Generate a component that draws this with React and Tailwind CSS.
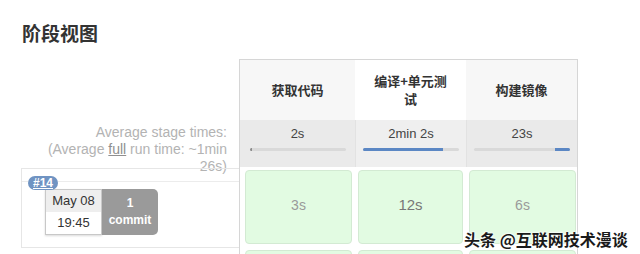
import React from "react";

function Bar({ fill }) {
  return (
    <div className="mx-auto mt-[6px] flex h-[3px] w-[96px] overflow-hidden rounded-full bg-[#d9d9d9]">
      {fill}
    </div>
  );
}

function Cell({ children, cls }) {
  return (
    <div className={"flex h-[74px] items-center justify-center rounded-[4px] border border-[#d3ead3] bg-[#e2fbe2] pb-[3px] " + cls}>
      {children}
    </div>
  );
}

export default function App() {
  return (
    <div className="relative h-[254px] w-[640px] overflow-hidden bg-white font-['Liberation_Sans','Noto_Sans_CJK_SC',sans-serif]">
      <div className="pl-[22px] pt-[23px] font-['Noto_Sans_CJK_SC',sans-serif] text-[19px] font-bold leading-[20px] text-[#333]">
        阶段视图
      </div>
      <div className="mt-[16px] flex">
        {/* left column */}
        <div className="w-[239px] shrink-0">
          <div className="h-[61px]" />
          <div className="h-[48px] pr-[12px] pt-[4px] text-right text-[14px] leading-[17px] text-[#b3b3b3]">
            Average stage times:
            <br />
            (Average <span className="text-[#8f8f8f] underline">full</span> run time: ~1min
            <br />
            26s)
          </div>
          <div className="relative ml-[21px] h-[80px] border-b border-l border-t border-[#e6e6e6]">
            <div className="h-[13px] border-b border-[#ececec]" />
            <div className="absolute left-[6px] top-[7px] rounded-full bg-[#6f93c2] px-[5px] text-[12px] font-bold leading-[14px] text-white underline">
              #14
            </div>
            <div className="ml-[23px] mt-[7px] flex">
              <div className="w-[57px] border border-[#c8c8c8] text-[13px] text-[#333] shadow-[0_1px_2px_rgba(0,0,0,0.15)]">
                <div className="flex h-[22px] items-center justify-center bg-[#eeeeee]">May 08</div>
                <div className="flex h-[22px] items-center justify-center bg-white">19:45</div>
              </div>
              <div className="flex h-[46px] w-[56px] flex-col items-center justify-center rounded-r-[5px] bg-[#9a9a9a] text-[12px] font-bold leading-[17px] text-white">
                <div>1</div>
                <div>commit</div>
              </div>
            </div>
          </div>
        </div>

        {/* stage table */}
        <div className="h-[200px] w-[339px] shrink-0 border-l border-r border-t border-[#d6d6d6]">
          <div className="grid h-[60px] grid-cols-[115px_111px_111px] font-['Noto_Sans_CJK_SC',sans-serif] text-[13px] font-bold leading-[18px] text-[#333]">
            <div className="flex items-center justify-center bg-[#f7f7f7] px-[14px] text-center">获取代码</div>
            <div className="flex items-center justify-center bg-white px-[14px] text-center">编译+单元测试</div>
            <div className="flex items-center justify-center bg-[#f7f7f7] px-[14px] text-center">构建镜像</div>
          </div>
          <div className="grid h-[47px] grid-cols-[115px_111px_111px] text-[13px] leading-[17px] text-[#444]">
            <div className="bg-[#eaeaea] pt-[5px] text-center">
              2s
              <Bar fill={<div className="h-full w-[2px] bg-[#8c8c8c]" />} />
            </div>
            <div className="border-l border-[#e2e2e2] bg-[#efefef] pt-[5px] text-center">
              2min 2s
              <Bar fill={<div className="h-full w-[80px] bg-[#5b87c4]" />} />
            </div>
            <div className="border-l border-[#e2e2e2] bg-[#eaeaea] pt-[5px] text-center">
              23s
              <Bar fill={<div className="ml-auto h-full w-[15px] bg-[#5b87c4]" />} />
            </div>
          </div>
          <div className="grid grid-cols-[115px_111px_111px] py-[3px]">
            <div className="pl-[5px] pr-[3px]">
              <Cell cls="text-[14px] text-[#9a9a9a]">3s</Cell>
            </div>
            <div className="px-[3px]">
              <Cell cls="text-[15px] text-[#777]">12s</Cell>
            </div>
            <div className="pl-[3px] pr-[1px]">
              <Cell cls="text-[14px] text-[#9a9a9a]">6s</Cell>
            </div>
          </div>
          <div className="grid grid-cols-[115px_111px_111px] py-[3px]">
            <div className="pl-[5px] pr-[3px]">
              <Cell cls="" />
            </div>
            <div className="px-[3px]">
              <Cell cls="" />
            </div>
            <div className="pl-[3px] pr-[1px]">
              <Cell cls="" />
            </div>
          </div>
        </div>
      </div>

      <div className="absolute left-[464px] top-[229px] whitespace-nowrap font-['Noto_Sans_CJK_SC',sans-serif] text-[16px] font-bold leading-[20px] text-[#1a1a1a] [text-shadow:0_0_2px_#fff,0_0_2px_#fff,0_0_3px_#fff]">
        头条 @互联网技术漫谈
      </div>
    </div>
  );
}
